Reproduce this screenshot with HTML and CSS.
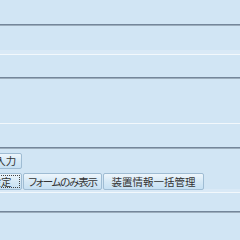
FILE: index.html
```html
<!DOCTYPE html>
<html lang="ja">
<head>
    <meta charset="UTF-8">
    <title>装置情報</title>
    <link rel="stylesheet" href="styles.css">
</head>
<body>
    <div class="space space-top"></div>
    <div class="rule"></div>
    <div class="panel panel-1"></div>
    <div class="space space-1"></div>
    <div class="rule"></div>
    <div class="panel panel-2"></div>
    <div class="space space-2"></div>
    <div class="rule"></div>
    <div class="panel panel-3">
        <div class="btn-row row-1">
            <button class="btn btn-input">データ入力</button>
        </div>
        <div class="btn-row row-2">
            <button class="btn btn-setting">表示設定</button>
            <button class="btn btn-form">フォームのみ表示</button>
            <button class="btn btn-bulk">装置情報一括管理</button>
        </div>
    </div>
    <div class="space space-3"></div>
    <div class="rule"></div>
</body>
</html>
```

FILE: styles.css
```css
body {
    margin: 0;
    background: #d1e5f4;
    font-family: "Noto Sans CJK JP", "Noto Sans", sans-serif;
    color: #333;
    overflow: hidden;
}
.space-top {
    height: 24px;
}
.space-1 {
    height: 22px;
}
.space-2 {
    height: 23px;
}
.space-3 {
    height: 18px;
}
.rule {
    border-top: 1px solid #74869a;
    border-bottom: 1px solid #9cadbc;
}
.panel {
    border-bottom: 1px solid #f2f8fc;
}
.panel-1 {
    height: 28px;
    background: linear-gradient(to bottom, transparent 24px, #d9e9f6 24px);
}
.panel-2 {
    height: 44px;
}
.panel-3 {
    height: 39px;
    padding-top: 4px;
    background: linear-gradient(to bottom, transparent 40px, #d9e9f6 40px);
}
.btn-row {
    display: flex;
    gap: 1px;
}
.row-1 {
    margin-left: -40px;
}
.row-2 {
    margin-top: 4px;
    margin-left: -41px;
}
.btn {
    font-family: inherit;
    font-size: 10.5px;
    font-feature-settings: "palt";
    white-space: nowrap;
    color: #333;
    padding: 0;
    border: 1px solid #9fbcd3;
    border-radius: 2px;
    background: linear-gradient(to bottom, #eef6fc, #d6e9f6 50%, #c6e0f3);
    line-height: 14px;
}
.btn-input {
    width: 62px;
    height: 16px;
}
.btn-setting {
    width: 63px;
    height: 17px;
    outline: 1px dotted #444;
    outline-offset: -3px;
}
.btn-form {
    width: 79px;
    height: 17px;
    letter-spacing: -1.2px;
}
.btn-bulk {
    width: 101px;
    height: 17px;
}
```
